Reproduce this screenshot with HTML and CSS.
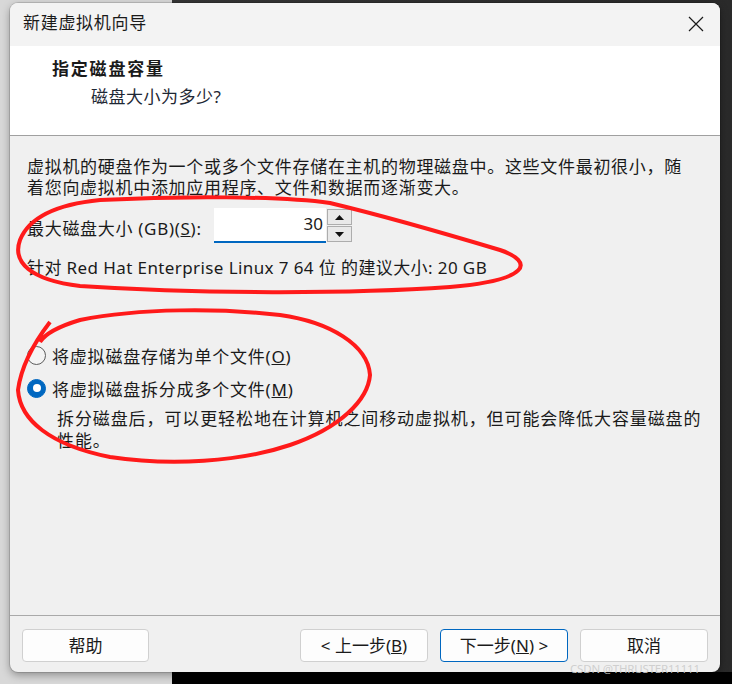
FILE: index.html
```html
<!DOCTYPE html>
<html lang="zh-CN">
<head>
<meta charset="utf-8">
<title>新建虚拟机向导</title>
<link rel="stylesheet" href="styles.css">
</head>
<body>
<div class="dialog">
  <div class="titlebar">
    <span class="title">新建虚拟机向导</span>
    <svg class="close" width="16" height="16" viewBox="0 0 16 16"><path d="M1 1 L15 15 M15 1 L1 15" stroke="#1a1a1a" stroke-width="1.2" fill="none"/></svg>
  </div>
  <div class="header">
    <div class="h-title">指定磁盘容量</div>
    <div class="h-sub">磁盘大小为多少?</div>
  </div>
  <div class="content">
    <p class="intro">虚拟机的硬盘作为一个或多个文件存储在主机的物理磁盘中。这些文件最初很小，随着您向虚拟机中添加应用程序、文件和数据而逐渐变大。</p>
    <div class="size-row">
      <label class="size-label">最大磁盘大小 (GB)(<u>S</u>):</label>
      <div class="input">30</div>
      <div class="spin">
        <div class="spin-btn"><svg width="9" height="5" viewBox="0 0 9 5"><path d="M0 5 L4.5 0 L9 5 Z" fill="#111"/></svg></div>
        <div class="spin-btn"><svg width="9" height="5" viewBox="0 0 9 5"><path d="M0 0 L9 0 L4.5 5 Z" fill="#111"/></svg></div>
      </div>
    </div>
    <div class="recommend">针对 Red Hat Enterprise Linux 7 64 位 的建议大小: 20 GB</div>
    <div class="radios">
      <div class="radio-row"><span class="radio"></span><span class="radio-label">将虚拟磁盘存储为单个文件(<u>O</u>)</span></div>
      <div class="radio-row"><span class="radio checked"></span><span class="radio-label">将虚拟磁盘拆分成多个文件(<u>M</u>)</span></div>
      <p class="desc">拆分磁盘后，可以更轻松地在计算机之间移动虚拟机，但可能会降低大容量磁盘的性能。</p>
    </div>
  </div>
  <div class="footer">
    <button class="btn">帮助</button>
    <div class="nav">
      <button class="btn">&lt; 上一步(<u>B</u>)</button>
      <button class="btn primary">下一步(<u>N</u>) &gt;</button>
      <button class="btn">取消</button>
    </div>
  </div>
</div>
<svg class="marks" width="732" height="684" viewBox="0 0 732 684">
  <path d="M100 200 C60 204 30 215 20 240 C12 262 30 280 80 286 C200 294 350 294 450 287 C530 280 535 262 500 250 C440 232 380 215 330 203 C280 196 180 196 100 200 Z" fill="none" stroke="#ff1a1a" stroke-width="4"/>
  <path d="M50 322 C40 335 22 360 18 390 C20 420 50 445 110 457 C170 466 240 462 290 445 C340 428 368 400 370 375 C368 345 330 322 280 315 C220 308 140 308 80 320 C60 326 45 334 40 342" fill="none" stroke="#ff1a1a" stroke-width="4"/>
</svg>
<div class="watermark">CSDN @THRUSTER11111</div>
</body>
</html>
```
FILE: styles.css
```css
html, body {
  margin: 0;
  padding: 0;
  width: 732px;
  height: 684px;
  overflow: hidden;
}
body {
  position: relative;
  font-family: "Noto Sans", "Noto Sans CJK SC", sans-serif;
  font-size: 17px;
  color: #1a1a1a;
  background:
    linear-gradient(#000, #000) 172px 672px / 100% 100% no-repeat,
    linear-gradient(to right, #d8d8d8 0, #d8d8d8 172px, #353535 172px, #2a2a2a 100%);
}
.dialog {
  margin: 3px 0 0 10px;
  width: 710px;
  height: 669px;
  border-radius: 8px;
  overflow: hidden;
  background: #f0f0f0;
  box-shadow: 0 0 0 1px rgba(0,0,0,0.12), 0 3px 8px rgba(0,0,0,0.35);
  display: flex;
  flex-direction: column;
}
.titlebar {
  height: 43px;
  flex-shrink: 0;
  background: #f3f3f3;
  display: flex;
  align-items: center;
  justify-content: space-between;
  padding: 0 16px 3px 13px;
  box-sizing: border-box;
}
.title {
  letter-spacing: 0.7px;
  line-height: 22px;
}
.close {
  display: block;
  margin-top: 2px;
}
.header {
  height: 90px;
  box-sizing: border-box;
  flex-shrink: 0;
  background: #fff;
  border-bottom: 1px solid #a0a0a0;
  padding: 12px 0 0 42px;
}
.h-title {
  font-weight: bold;
  letter-spacing: 1.8px;
  line-height: 22px;
}
.h-sub {
  margin: 6px 0 0 39px;
  line-height: 22px;
  letter-spacing: 0.5px;
  color: #1e2733;
}
.content {
  flex: 1;
  padding: 20px 0 0 17px;
}
.intro {
  margin: 0;
  max-width: 664px;
  line-height: 21px;
  letter-spacing: 0.7px;
}
.size-row {
  margin-top: 10px;
  display: flex;
  align-items: center;
  height: 35px;
}
.size-label {
  width: 187px;
  flex-shrink: 0;
  padding-top: 4px;
  letter-spacing: 0.7px;
}
.input {
  width: 112px;
  height: 35px;
  box-sizing: border-box;
  background: #fff;
  border-bottom: 2px solid #0067c0;
  text-align: right;
  padding: 3px 3px 0 0;
  line-height: 26px;
}
.spin {
  margin-left: 1px;
  width: 25px;
  height: 33px;
  display: flex;
  flex-direction: column;
  gap: 1px;
}
.spin-btn {
  flex: 1;
  box-sizing: border-box;
  border: 1px solid #adadad;
  background: #e9e9e9;
  display: flex;
  align-items: center;
  justify-content: center;
}
.spin-btn svg {
  display: block;
}
.recommend {
  margin-top: 14px;
  line-height: 21px;
  letter-spacing: 0.4px;
}
.radios {
  margin-top: 65px;
  display: flex;
  flex-direction: column;
  gap: 9px;
}
.radio-row {
  display: flex;
  align-items: center;
  height: 24px;
  gap: 6px;
}
.radio {
  width: 19px;
  height: 19px;
  box-sizing: border-box;
  border-radius: 50%;
  border: 1px solid #5c5c5c;
  background: #f4f4f4;
  flex-shrink: 0;
  display: flex;
  align-items: center;
  justify-content: center;
}
.radio.checked {
  border-color: #0067c0;
  background: #0067c0;
}
.radio.checked::after {
  content: "";
  width: 8px;
  height: 8px;
  border-radius: 50%;
  background: #fff;
}
.radio-label {
  letter-spacing: 0.8px;
}
.desc {
  margin: -1px 0 0 30px;
  max-width: 650px;
  line-height: 22px;
  letter-spacing: 0.9px;
}
.footer {
  flex-shrink: 0;
  height: 57px;
  box-sizing: border-box;
  border-top: 1px solid #a9a9a9;
  padding: 13px 12px 0 12px;
  display: flex;
  justify-content: space-between;
  align-items: flex-start;
}
.nav {
  display: flex;
  gap: 12px;
}
.btn {
  width: 128px;
  height: 33px;
  box-sizing: border-box;
  background: #fdfdfd;
  border: 1px solid #d0d0d0;
  border-radius: 4px;
  font-family: inherit;
  font-size: 17px;
  color: #1a1a1a;
  padding: 0;
  line-height: 30px;
}
.footer > .btn {
  width: 127px;
}
.btn.primary {
  border-color: #0067c0;
}
.marks {
  position: absolute;
  left: 0;
  top: 0;
  pointer-events: none;
}
.watermark {
  position: absolute;
  left: 570px;
  top: 662px;
  font-size: 11.5px;
  line-height: 14px;
  color: rgba(205, 205, 205, 0.95);
  letter-spacing: -0.2px;
}
```
